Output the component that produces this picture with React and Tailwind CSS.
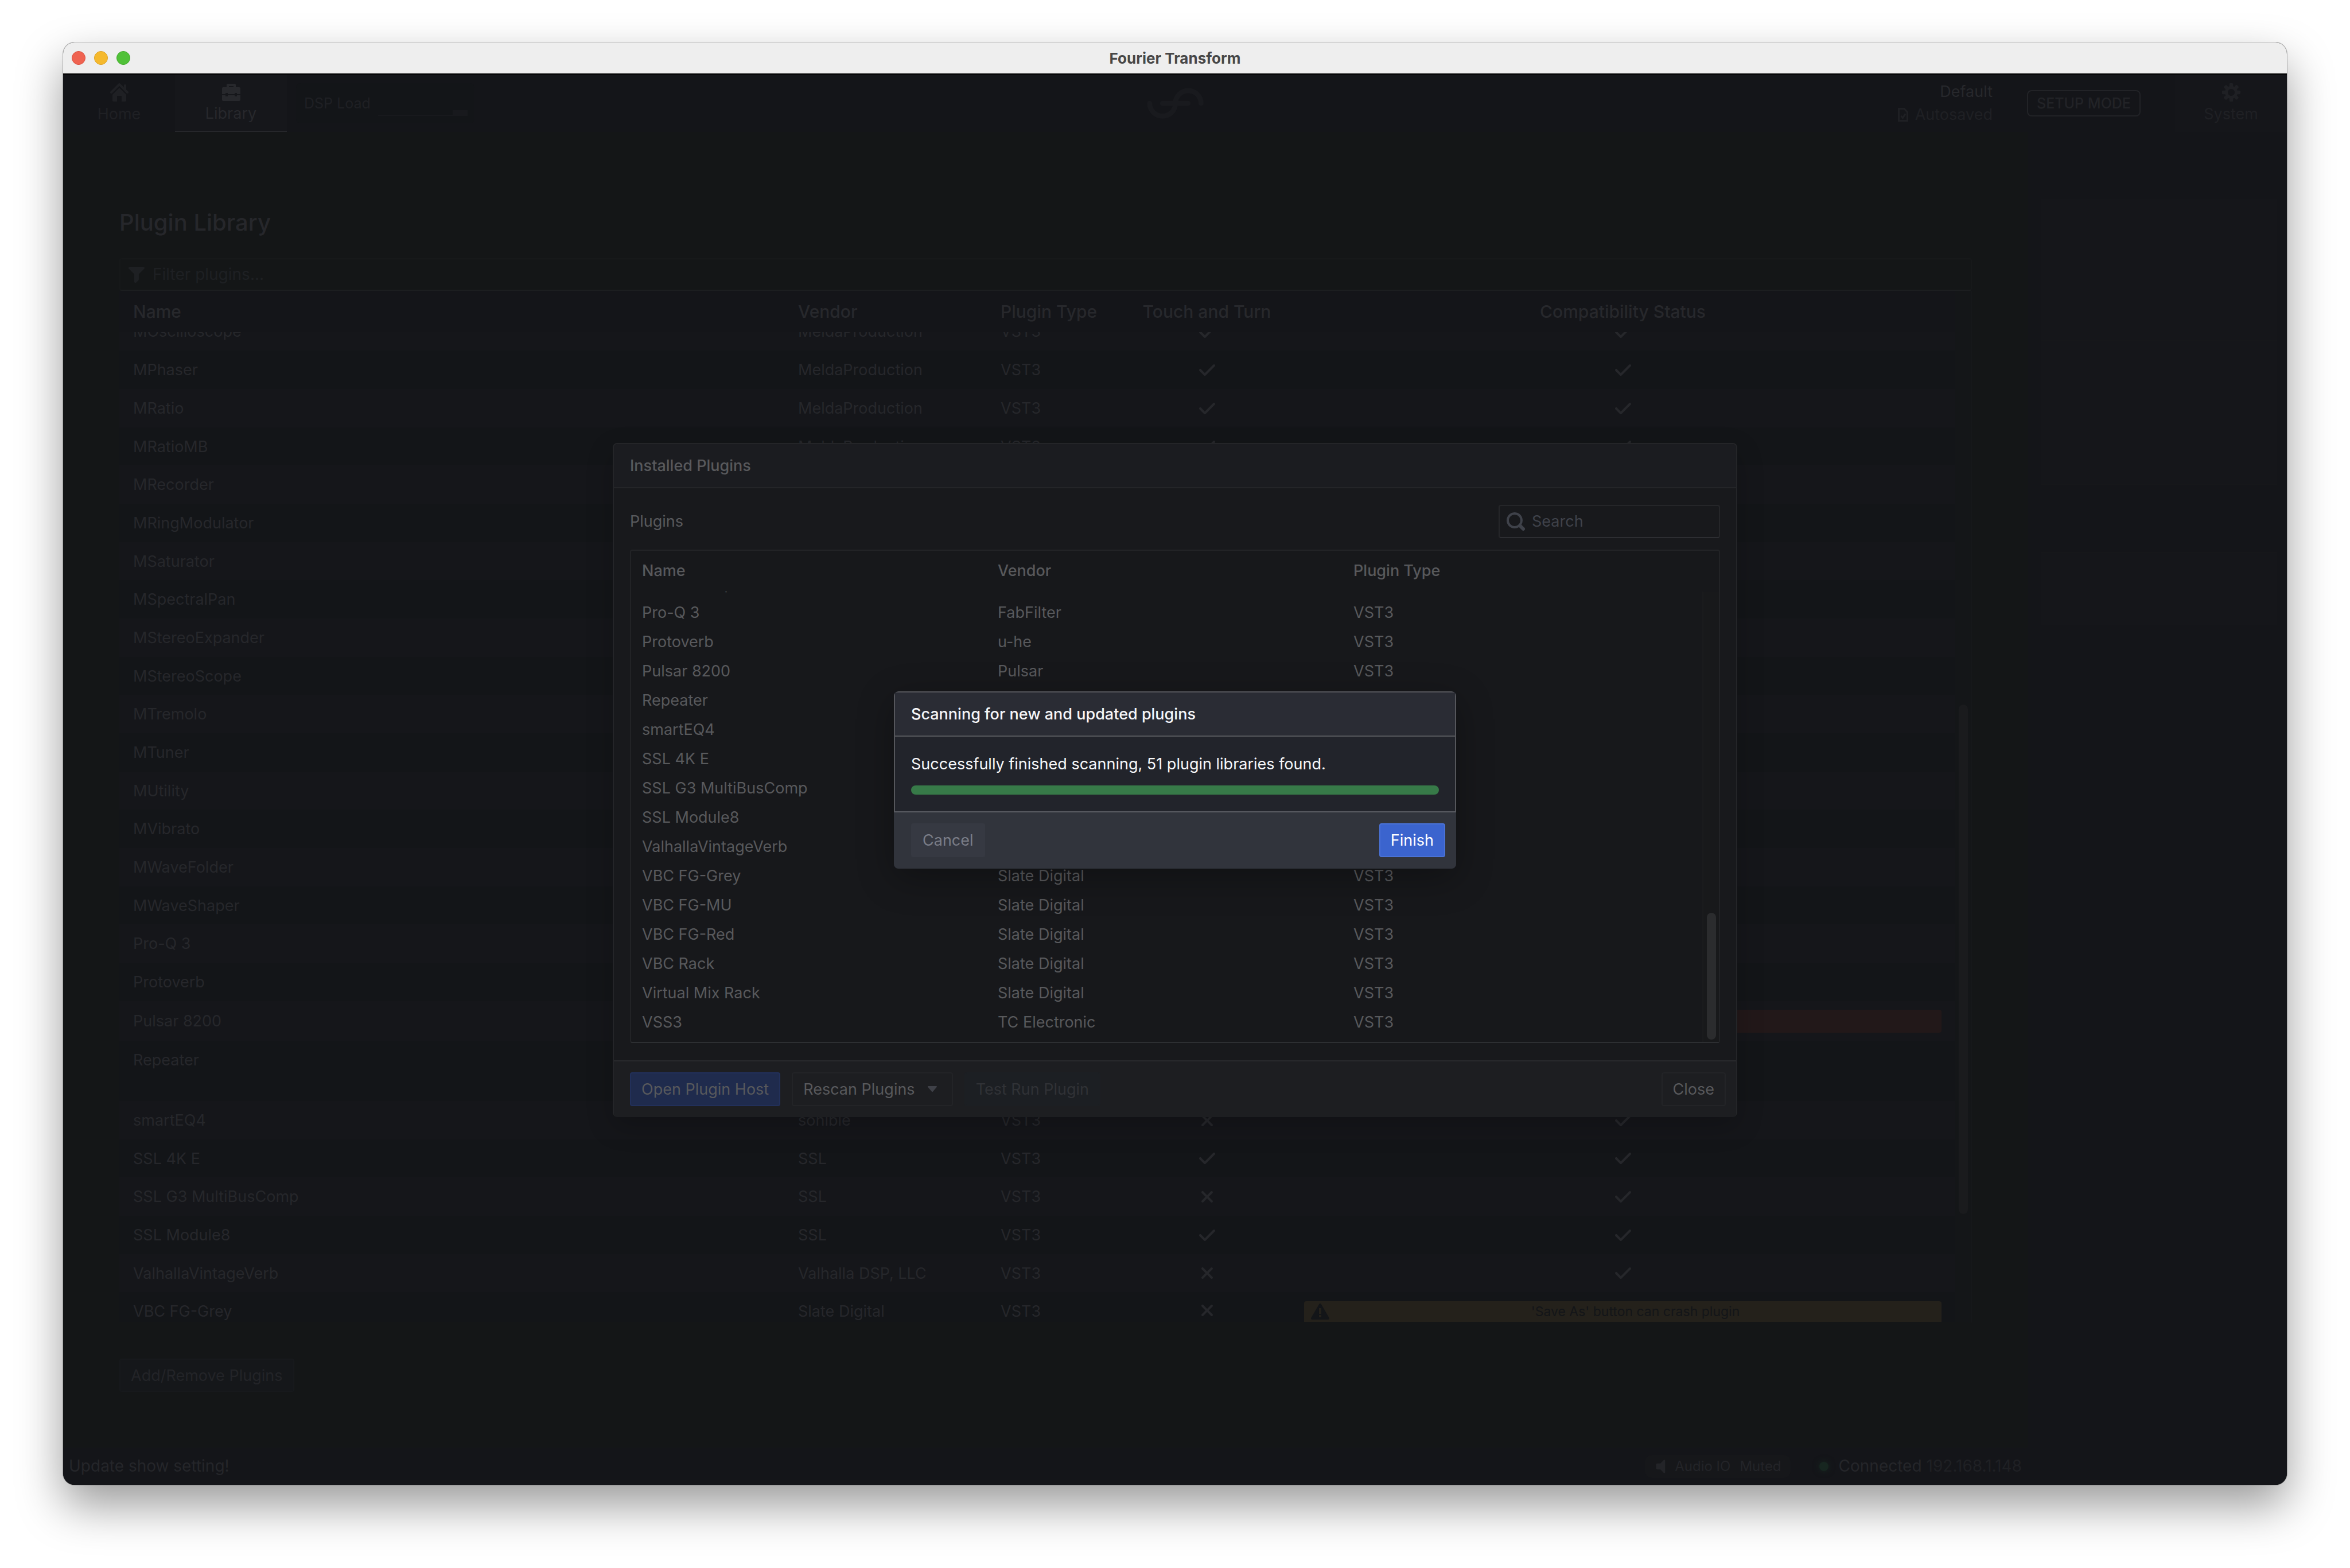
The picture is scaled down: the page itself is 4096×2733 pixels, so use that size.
import React from "react";

const M = "MeldaProduction";

const ICONS = {
  home: "M2 10v5c0 .55.45 1 1 1h3v-5h4v5h3c.55 0 1-.45 1-1v-5L8 4l-6 6zm13.71-2.71L14 5.59V2c0-.55-.45-1-1-1s-1 .45-1 1v1.59L8.71.3C8.53.11 8.28 0 8 0s-.53.11-.71.29l-7 7a1.003 1.003 0 001.42 1.42L8 2.41l6.29 6.29c.18.19.43.3.71.3a1.003 1.003 0 00.71-1.71z",
  toolbox:
    "M5 1h6c.55 0 1 .45 1 1v2h3c.55 0 1 .45 1 1v5h-3V9h-2v1H5V9H3v1H0V5c0-.55.45-1 1-1h3V2c0-.55.45-1 1-1zm1 2v1h4V3H6zM0 11h3v1h2v-1h6v1h2v-1h3v4c0 .55-.45 1-1 1H1c-.55 0-1-.45-1-1v-4z",
  cog: "M15.19 6.39h-1.85c-.11-.37-.27-.71-.45-1.04l1.36-1.36c.31-.31.31-.82 0-1.13l-1.13-1.13c-.31-.31-.82-.31-1.13 0l-1.36 1.36c-.33-.17-.67-.33-1.04-.44V.79c0-.44-.36-.8-.8-.8h-1.6c-.44 0-.8.36-.8.8v1.86c-.39.12-.75.28-1.1.47l-1.3-1.3c-.3-.3-.79-.3-1.09 0L1.82 2.91c-.3.3-.3.79 0 1.09l1.3 1.3c-.2.34-.36.7-.48 1.09H.79c-.44 0-.8.36-.8.8v1.6c0 .44.36.8.8.8h1.85c.11.37.27.71.45 1.04l-1.36 1.36c-.31.31-.31.82 0 1.13l1.13 1.13c.31.31.82.31 1.13 0l1.36-1.36c.33.18.67.33 1.04.44v1.86c0 .44.36.8.8.8h1.6c.44 0 .8-.36.8-.8v-1.86c.39-.12.75-.28 1.1-.47l1.3 1.3c.3.3.79.3 1.09 0l1.09-1.09c.3-.3.3-.79 0-1.09l-1.3-1.3c.19-.35.36-.71.48-1.1h1.85c.44 0 .8-.36.8-.8v-1.6a.816.816 0 00-.81-.79zm-7.2 4.6c-1.66 0-3-1.34-3-3s1.34-3 3-3 3 1.34 3 3-1.34 3-3 3z",
  filter:
    "M13.99.99h-12a1.003 1.003 0 00-.71 1.71l4.71 4.71V14a1.003 1.003 0 001.71.71l2-2c.18-.18.29-.43.29-.71V7.41L14.7 2.7a1.003 1.003 0 00-.71-1.71z",
  search:
    "M15.55 13.43l-2.67-2.68a6.94 6.94 0 001.11-3.76c0-3.87-3.13-7-7-7s-7 3.13-7 7 3.13 7 7 7c1.39 0 2.68-.42 3.76-1.11l2.68 2.67a1.498 1.498 0 102.12-2.12zm-8.56-1.44c-2.76 0-5-2.24-5-5s2.24-5 5-5 5 2.24 5 5-2.24 5-5 5z",
  tick: "M14 3c-.28 0-.53.11-.71.29L6 10.59l-3.29-3.3a1.003 1.003 0 00-1.42 1.42l4 4c.18.18.43.29.71.29s.53-.11.71-.29l8-8A1.003 1.003 0 0014 3z",
  cross:
    "M9.41 8l3.29-3.29c.19-.18.3-.43.3-.71a1.003 1.003 0 00-1.71-.71L8 6.59l-3.29-3.3a1.003 1.003 0 00-1.42 1.42L6.59 8 3.3 11.29c-.19.18-.3.43-.3.71a1.003 1.003 0 001.71.71L8 9.41l3.29 3.29c.18.19.43.3.71.3a1.003 1.003 0 00.71-1.71L9.41 8z",
  warning:
    "M15.84 13.5l.01-.01-7-12-.01.01c-.17-.3-.48-.5-.85-.5s-.67.2-.85.5l-.01-.01-7 12 .01.01c-.09.15-.15.31-.15.5 0 .55.45 1 1 1h14c.55 0 1-.45 1-1 0-.19-.06-.35-.15-.5zm-6.85-.51h-2v-2h2v2zm0-3h-2v-5h2v5z",
  caret: "M4 5.2h8c.5 0 .7.5.4.9l-3.9 4.6c-.3.3-.7.3-1 0L3.6 6.1c-.3-.4-.1-.9.4-.9z",
  speaker: "M11 2.2v11.6c0 .7-.8 1-1.3.6L6.3 11H3c-.55 0-1-.45-1-1V6c0-.55.45-1 1-1h3.3l3.4-3.4c.5-.4 1.3-.1 1.3.6z",
};

function Icon({ name, className }) {
  return (
    <svg viewBox="0 0 16 16" fill="currentColor" aria-hidden="true" className={className}>
      <path d={ICONS[name]} />
    </svg>
  );
}

const TALL = "h-[67px]";
const SHORT = "h-[66px]";

const LIBRARY = [
  ["MPhaser", M, "tick", "tick"],
  ["MRatio", M, "tick", "tick"],
  ["MRatioMB", M, "tick", "tick"],
  ["MRecorder", M, "tick", "tick"],
  ["MRingModulator", M, "tick", "tick"],
  ["MSaturator", M, "tick", "tick"],
  ["MSpectralPan", M, "tick", "tick"],
  ["MStereoExpander", M, "tick", "tick"],
  ["MStereoScope", M, "tick", "tick"],
  ["MTremolo", M, "tick", "tick"],
  ["MTuner", M, "tick", "tick"],
  ["MUtility", M, "tick", "tick"],
  ["MVibrato", M, "tick", "tick"],
  ["MWaveFolder", M, "tick", "tick"],
  ["MWaveShaper", M, "tick", "tick"],
  ["Pro-Q 3", "FabFilter", "tick", "tick"],
  ["Protoverb", "u-he", "tick", "tick"],
  ["Pulsar 8200", "Pulsar", "tick", "error"],
  ["Repeater", "Slate Digital", "tick", "tick"],
  ["smartEQ4", "sonible", "cross", "tick"],
  ["SSL 4K E", "SSL", "tick", "tick"],
  ["SSL G3 MultiBusComp", "SSL", "cross", "tick"],
  ["SSL Module8", "SSL", "tick", "tick"],
  ["ValhallaVintageVerb", "Valhalla DSP, LLC", "cross", "tick"],
];

const INSTALLED = [
  ["Pro-Q 3", "FabFilter"],
  ["Protoverb", "u-he"],
  ["Pulsar 8200", "Pulsar"],
  ["Repeater", "Slate Digital"],
  ["smartEQ4", "sonible"],
  ["SSL 4K E", "SSL"],
  ["SSL G3 MultiBusComp", "SSL"],
  ["SSL Module8", "SSL"],
  ["ValhallaVintageVerb", "Valhalla DSP, LLC"],
  ["VBC FG-Grey", "Slate Digital"],
  ["VBC FG-MU", "Slate Digital"],
  ["VBC FG-Red", "Slate Digital"],
  ["VBC Rack", "Slate Digital"],
  ["Virtual Mix Rack", "Slate Digital"],
  ["VSS3", "TC Electronic"],
];

function rowHeight(name, i) {
  if (name === "Pulsar 8200") return "h-[69px]";
  if (name === "Repeater") return "h-[105px]";
  return i % 3 === 2 ? SHORT : TALL;
}

function Status({ kind }) {
  if (kind === "error") return <div className="h-10 rounded-sm bg-[#221819]" />;
  return <Icon name={kind} className="mx-auto h-8 w-8" />;
}

/* First visible row, scrolled so that only its lower part shows. */
function ScrolledCell({ className, children }) {
  return (
    <td className="px-6 py-0">
      <div className={`flex items-end overflow-hidden leading-[66px] ${className}`}>{children}</div>
    </td>
  );
}

function LibraryTable() {
  return (
    <div className="flex border-r border-[#17191a]">
      <table className="w-full min-w-0 flex-1 table-fixed border-collapse text-left">
        <colgroup>
          <col />
          <col className="w-[353px]" />
          <col className="w-[238px]" />
          <col className="w-[291px]" />
          <col />
        </colgroup>
        <thead>
          <tr className="h-[72px] bg-[#141519] text-[30px] text-[#27282c]">
            <th className="px-6 font-medium">Name</th>
            <th className="px-6 font-medium">Vendor</th>
            <th className="px-6 font-medium">Plugin Type</th>
            <th className="px-6 text-center font-medium">Touch and Turn</th>
            <th className="px-6 text-center font-medium">Compatibility Status</th>
          </tr>
        </thead>
        <tbody className="text-[#26272b]">
          <tr className="bg-[#15161a]">
            <ScrolledCell className="h-8">MOscilloscope</ScrolledCell>
            <ScrolledCell className="h-8">{M}</ScrolledCell>
            <ScrolledCell className="h-8">VST3</ScrolledCell>
            <ScrolledCell className="h-8 justify-center">
              <Icon name="tick" className="mb-4 h-8 w-8 shrink-0" />
            </ScrolledCell>
            <ScrolledCell className="h-8 justify-center">
              <Icon name="tick" className="mb-4 h-8 w-8 shrink-0" />
            </ScrolledCell>
          </tr>
          {LIBRARY.map(([name, vendor, touch, compat], i) => (
            <tr
              key={name}
              className={`${rowHeight(name, i)} ${i % 2 ? "bg-[#15161a]" : "bg-[#131518]"} ${
                name === "Repeater" ? "align-top" : "align-middle"
              }`}
            >
              <td className={name === "Repeater" ? "px-6 pt-4" : "px-6"}>{name}</td>
              <td className="px-6">{vendor}</td>
              <td className="px-6">VST3</td>
              <td className="px-6">
                <Status kind={touch} />
              </td>
              <td className="px-6">
                <Status kind={compat} />
              </td>
            </tr>
          ))}
          <tr className="h-[53px] bg-[#131518] align-top">
            <td className="px-6 pt-4">VBC FG-Grey</td>
            <td className="px-6 pt-4">Slate Digital</td>
            <td className="px-6 pt-4">VST3</td>
            <td className="px-6 pt-4">
              <Status kind="cross" />
            </td>
            <td className="px-6 pt-4">
              <div className="flex h-9 items-center rounded-t-sm bg-[#24211b] pl-3 text-[23px] text-[#131518]">
                <Icon name="warning" className="h-8 w-8" />
                <span className="flex-1 text-center">'Save As' button can crash plugin</span>
              </div>
            </td>
          </tr>
        </tbody>
      </table>
      <div className="flex w-7 flex-col bg-[#141618]" aria-hidden="true">
        <div className="grow-[721]" />
        <div className="mx-auto w-4 grow-[887] rounded-full bg-[#1a1b1d]" />
        <div className="grow-[189]" />
      </div>
    </div>
  );
}

function NavButton({ icon, label, className }) {
  return (
    <button type="button" className={`flex w-[195px] flex-col items-center justify-center gap-1 ${className}`}>
      <Icon name={icon} className="h-8 w-8" />
      <span>{label}</span>
    </button>
  );
}

function Toolbar() {
  return (
    <header className="grid h-[100px] shrink-0 grid-cols-[1fr_auto_1fr] bg-[#141519]">
      <nav className="flex" aria-label="Main">
        <NavButton icon="home" label="Home" className="bg-[#141519] text-[#1f2024]" />
        <NavButton icon="toolbox" label="Library" className="border-b-2 border-[#26272b] bg-[#16171b] text-[#27282c]" />
        <div className="my-auto ml-4 flex h-[70px] w-[311px] items-center justify-between rounded-lg bg-[#131518] pr-3 pl-3.5 text-[25px] whitespace-nowrap text-[#1f2024]">
          <span>DSP Load</span>
          <div className="flex h-11 w-[156px] items-end justify-end border-b-2 border-[#18191d]">
            <div className="h-2 w-[26px] bg-[#18191d]" />
          </div>
        </div>
      </nav>
      <div className="flex items-center">
        <svg viewBox="416 313 303 165" className="h-[54px] w-[99px] text-[#191a1e]" fill="none" stroke="currentColor" strokeWidth="27" strokeLinecap="round" role="img" aria-label="Fourier">
          <path d="M431 396A68.5 68 0 0 0 568 396A68.5 68 0 0 1 705 396M499 396H636" />
        </svg>
      </div>
      <div className="flex items-stretch justify-end">
        <div className="flex flex-col items-end justify-center gap-1 leading-9">
          <span className="text-[#27282c]">Default</span>
          <span className="flex items-center gap-3 text-[#1f2024]">
            <svg viewBox="0 0 18 24" className="h-6 w-[18px]" fill="none" stroke="currentColor" strokeWidth="3" aria-hidden="true">
              <path d="M1.5 1.5h9.5l5.5 6v15h-15zM5.5 14l3 3.5 4.5-7" />
            </svg>
            Autosaved
          </span>
        </div>
        <button type="button" className="mr-[60px] ml-[60px] h-[46px] w-[198px] self-center rounded-lg border-2 border-[#222327] text-[25px] font-medium text-[#222327]">
          SETUP MODE
        </button>
        <NavButton icon="cog" label="System" className="bg-[#15161a] text-[#1f2024]" />
      </div>
    </header>
  );
}

function StatusBar() {
  return (
    <footer className="mt-auto flex h-[65px] shrink-0 items-center bg-[#141519] pr-[11px] pl-2.5 text-[28px]">
      <span className="text-[#25262a]">Update show setting!</span>
      <div className="ml-auto flex h-10 items-center rounded-xl bg-[#16171a] pr-4 pl-4 text-[24px] text-[#232428]">
        <Icon name="speaker" className="mr-2 h-7 w-7" />
        <span>Audio IO</span>
        <span className="ml-4">Muted</span>
      </div>
      <div className="ml-[50px] flex items-center">
        <span className="h-4 w-4 rounded-full bg-[#172620] shadow-[0_0_12px_#172620]" />
        <span className="ml-[18px] text-[#25262a]">Connected</span>
        <span className="ml-2 text-[#1f2024]">192.168.1.148</span>
      </div>
    </footer>
  );
}

function SidePanel() {
  return (
    <aside className="w-[451px] shrink-0 bg-[#141519] pt-[116px] pr-[17px] pl-[22px]">
      <div className="h-[247px] bg-[#15161a]" />
      <div className="h-[250px] border-t-2 border-[#16171a] bg-[#15161a]" />
      <div className="h-[119px] border-t-2 border-[#16171a] bg-[#141519]" />
      <div className="h-32 border-t-2 border-[#16171a] bg-[#15161a]" />
    </aside>
  );
}

function InstalledTable() {
  return (
    <div className="flex rounded-sm border-2 border-[#222326] border-b-[#2d2f32] bg-[#17181b]">
      <table className="w-full min-w-0 flex-1 table-fixed border-collapse text-left leading-9">
        <colgroup>
          <col className="w-[620px]" />
          <col className="w-[620px]" />
          <col />
        </colgroup>
        <thead>
          <tr className="h-[71px]">
            <th className="px-[19px] font-medium">Name</th>
            <th className="px-[19px] font-medium">Vendor</th>
            <th className="px-[19px] font-medium">Plugin Type</th>
          </tr>
        </thead>
        <tbody>
          <tr>
            <td className="px-[19px]">
              <div className="flex h-3 items-end overflow-hidden leading-[51px]">MWaveShaper</div>
            </td>
            <td />
            <td />
          </tr>
          {INSTALLED.map(([name, vendor]) => (
            <tr key={name} className="h-[51px]">
              <td className="px-[19px]">{name}</td>
              <td className="px-[19px]">{vendor}</td>
              <td className="px-[19px]">VST3</td>
            </tr>
          ))}
          <tr className="h-2">
            <td colSpan={3} />
          </tr>
        </tbody>
      </table>
      <div className="mt-[71px] flex w-[29px] flex-col justify-end border-l-2 border-[#1a1b1d] bg-[#18191b] pb-1" aria-hidden="true">
        <div className="mx-auto h-[221px] w-4 rounded-full bg-[#2b2c2e]" />
      </div>
    </div>
  );
}

function InstalledDialog() {
  return (
    <section role="dialog" aria-label="Installed Plugins" className="w-[1960px] overflow-hidden rounded-lg border-2 border-b-0 border-[#242528] bg-[#18191c] text-[#58595c] shadow-[0_16px_48px_rgba(0,0,0,0.2)]">
      <h2 className="flex h-[77px] items-center border-b-2 border-[#242528] bg-[#1b1c20] px-7 font-medium">Installed Plugins</h2>
      <div className="px-7 pt-[29px] pb-[30px]">
        <div className="mb-5 flex items-center justify-between">
          <span>Plugins</span>
          <label className="flex h-[58px] w-[386px] items-center gap-3 rounded-sm border-2 border-[#252629] border-b-[#2d2e32] px-3 text-[#3f424a]">
            <Icon name="search" className="h-8 w-8 shrink-0" />
            <input type="search" placeholder="Search" aria-label="Search plugins" className="min-w-0 flex-1 bg-transparent outline-none placeholder:text-[#3f424a]" />
          </label>
        </div>
        <InstalledTable />
      </div>
      <div className="flex h-[99px] items-center gap-5 border-t-2 border-[#28292c] bg-[#1d1e21] pr-[18px] pl-7">
        <button type="button" className="h-[59px] rounded-sm border-2 border-[#22305a] bg-[#1f2b4d] px-[18px]">
          Open Plugin Host
        </button>
        <button type="button" className="flex h-[59px] items-center rounded-sm border-2 border-[#232427] pr-5 pl-[18px]">
          Rescan Plugins
          <Icon name="caret" className="ml-4 h-7 w-7 text-[#3f4148]" />
        </button>
        <button type="button" disabled className="h-[59px] rounded-sm border-2 border-[#1c1f23] bg-[#1c1f23] px-[18px] text-[#303236]">
          Test Run Plugin
        </button>
        <button type="button" className="ml-auto h-[59px] rounded-sm border-2 border-[#232427] px-[18px]">
          Close
        </button>
      </div>
    </section>
  );
}

function ScanDialog() {
  return (
    <section role="dialog" aria-label="Scanning for new and updated plugins" className="w-[980px] overflow-hidden rounded-lg bg-[#22242b] text-[#f6f7f9] shadow-[0_16px_64px_rgba(0,0,0,0.3)]">
      <div className="rounded-t-lg border-2 border-b-0 border-[#55565b]">
        <h2 className="flex h-[77px] items-center border-b-2 border-[#55565b] bg-[#2a2c34] px-7 font-medium">
          Scanning for new and updated plugins
        </h2>
        <div className="px-7 pt-[30px] pb-[29px]">
          <p id="scan-state">Successfully finished scanning, 51 plugin libraries found.</p>
          <div role="progressbar" aria-labelledby="scan-state" aria-valuenow={100} className="mt-5 h-4 rounded-full bg-[#377a48]" />
        </div>
      </div>
      <div className="flex h-[100px] items-center justify-between border-t-2 border-[#595b62] bg-[#31343c] pr-[19px] pl-[30px]">
        <button type="button" disabled className="h-[59px] rounded-sm bg-[#363942] px-5 text-[#7a7d87]">
          Cancel
        </button>
        <button type="button" className="h-[59px] rounded-sm border-2 border-[#4a72d6] bg-[#3b64ce] px-[18px] text-white">
          Finish
        </button>
      </div>
    </section>
  );
}

export default function App() {
  return (
    <div className="flex min-h-screen flex-col bg-white px-[110px] pt-[74px] pb-[145px] font-['Inter',sans-serif] text-[27px] leading-[35px]">
      <div className="flex flex-1 flex-col overflow-hidden rounded-[20px] bg-[#141617] shadow-[0_36px_80px_rgba(0,0,0,0.4),0_0_0_1px_rgba(0,0,0,0.25)]">
        <div className="grid h-14 shrink-0 grid-cols-[1fr_auto_1fr] items-center border-b-2 border-black bg-[#eeeeee] px-[15px]">
          <div className="flex gap-[15px]">
            <button type="button" aria-label="Close window" className="h-6 w-6 rounded-full border border-[#d9503f] bg-[#ef6351]" />
            <button type="button" aria-label="Minimise window" className="h-6 w-6 rounded-full border border-[#dba127] bg-[#f5b92d]" />
            <button type="button" aria-label="Zoom window" className="h-6 w-6 rounded-full border border-[#41a82b] bg-[#50c138]" />
          </div>
          <h1 className="text-[26px] font-bold text-[#474747]">Fourier Transform</h1>
        </div>

        <div className="relative flex flex-1 flex-col">
          <Toolbar />
          <div className="flex flex-1">
            <main className="flex min-w-0 flex-1 flex-col">
              <div className="px-[98px] pt-[133px] pb-8">
                <h2 className="mb-[37px] text-[40px] leading-[50px] font-medium text-[#26272b]">Plugin Library</h2>
                <label className="flex h-[57px] items-center gap-3 rounded-sm border-2 border-[#17191a] border-b-[#1c1e20] px-3 text-[28px] text-[#1e2023]">
                  <Icon name="filter" className="h-8 w-8 shrink-0" />
                  <input type="search" placeholder="Filter plugins..." aria-label="Filter plugins" className="min-w-0 flex-1 bg-transparent outline-none placeholder:text-[#1e2023]" />
                </label>
                <LibraryTable />
                <button type="button" className="mt-[63px] h-[58px] rounded-sm border-2 border-[#17191c] bg-[#15171a] px-[18px] text-[#232428]">
                  Add/Remove Plugins
                </button>
              </div>
              <StatusBar />
            </main>
            <SidePanel />
          </div>

          <div className="absolute inset-0 flex items-center justify-center">
            <InstalledDialog />
          </div>
          <div className="absolute inset-0 flex items-center justify-center">
            <ScanDialog />
          </div>
        </div>
      </div>
    </div>
  );
}
